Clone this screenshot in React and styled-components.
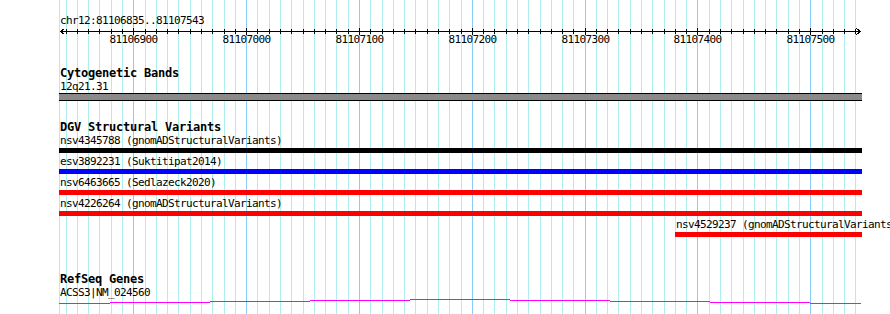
import React from 'react';
import styled, { createGlobalStyle } from 'styled-components';

const GlobalStyle = createGlobalStyle`
  html, body {
    margin: 0;
    padding: 0;
    background: #fff;
  }
`

const START = 81106835
const END = 81107543
const X0 = 59.96
const SCALE = 1.12833
const LEFT = 59
const RIGHT = 862

const toX = (bp) => X0 + (bp - START) * SCALE

const minorTicks = []
for (let bp = Math.ceil(START / 10) * 10; bp <= END; bp += 10) minorTicks.push(bp)
const majorTicks = minorTicks.filter((bp) => bp % 100 === 0)

const variants = [
    { name: 'nsv4345788', source: 'gnomADStructuralVariants', color: '#000000', start: 81106700, end: 81107800 },
    { name: 'esv3892231', source: 'Suktitipat2014', color: '#0000ff', start: 81106700, end: 81107800 },
    { name: 'nsv6463665', source: 'Sedlazeck2020', color: '#ff0000', start: 81106700, end: 81107800 },
    { name: 'nsv4226264', source: 'gnomADStructuralVariants', color: '#ff0000', start: 81106700, end: 81107800 },
    { name: 'nsv4529237', source: 'gnomADStructuralVariants', color: '#ff0000', start: 81107380, end: 81107800 },
]

const Panel = styled.div`
    position: relative;
    width: 890px;
    height: 314px;
    overflow: hidden;
    background: #fff;
    font-family: "DejaVu Sans Mono", "Liberation Mono", monospace;
    color: #000;
`

const Grid = styled.svg`
    position: absolute;
    left: 0;
    top: 0;
    width: 890px;
    height: 314px;
    z-index: 0;
`

const Tracks = styled.div`
    position: relative;
    z-index: 1;
    padding-left: ${LEFT}px;
`

const RulerBlock = styled.section`
    box-sizing: border-box;
    height: 47px;
    padding-top: 14px;
`

const SmallText = styled.div`
    font-size: 11px;
    letter-spacing: -0.62px;
    line-height: 13px;
    height: 13px;
    padding-left: 1px;
    white-space: nowrap;
`

const Scale = styled.div`
    position: relative;
    height: 20px;
`

const ScaleSvg = styled.svg`
    display: block;
    width: ${RIGHT - LEFT}px;
    height: 9px;
`

const TickLabel = styled.span`
    position: absolute;
    top: 6px;
    transform: translateX(-50%);
    font-size: 11px;
    letter-spacing: -0.62px;
    line-height: 13px;
    white-space: nowrap;
`

const Track = styled.section`
    margin-top: ${(p) => p.$gap}px;
`

const TrackTitle = styled.h3`
    margin: 0;
    padding-left: 1px;
    font-size: 12px;
    letter-spacing: -0.22px;
    line-height: 13px;
    height: 13px;
    font-weight: bold;
    white-space: nowrap;
`

const BandBar = styled.div`
    box-sizing: border-box;
    width: ${RIGHT - LEFT}px;
    height: 8px;
    background: #8a8a8a;
    border-top: 1px solid #000;
    border-bottom: 1px solid #000;
`

const FeatureRow = styled.div`
    height: 21px;
`

const FeatureBar = styled.div`
    height: 5px;
    margin-top: 1px;
    background: ${(p) => p.$color};
`

const GeneSvg = styled.svg`
    display: block;
    width: ${RIGHT - LEFT}px;
    height: 6px;
`

const clip = (x) => Math.max(LEFT, Math.min(RIGHT, x))

function Ruler() {
    const w = RIGHT - LEFT
    const y = 4.5
    return (
        <RulerBlock>
            <SmallText>chr12:{START}..{END}</SmallText>
            <Scale>
                <ScaleSvg viewBox={`0 0 ${w} 9`} shapeRendering="crispEdges">
                    <line x1={1} y1={y} x2={w - 1} y2={y} stroke="#000" />
                    <path d={`M1.5 ${y} L5.5 ${y - 3} M1.5 ${y} L5.5 ${y + 3}`} stroke="#000" fill="none" />
                    <path d={`M${w - 1.5} ${y} L${w - 5.5} ${y - 3} M${w - 1.5} ${y} L${w - 5.5} ${y + 3}`} stroke="#000" fill="none" />
                    {minorTicks.map((bp) => {
                        const x = Math.round(toX(bp)) - LEFT + 0.5
                        const major = bp % 100 === 0
                        return <line key={bp} x1={x} x2={x} y1={major ? 1 : 2} y2={major ? 8 : 7} stroke="#000" />
                    })}
                </ScaleSvg>
                {majorTicks.map((bp) => (
                    <TickLabel key={bp} style={{ left: Math.round(toX(bp)) - LEFT + 0.5 }}>{bp}</TickLabel>
                ))}
            </Scale>
        </RulerBlock>
    )
}

function GeneLine() {
    const w = RIGHT - LEFT
    const steps = [[0, 51, 4], [51, 151, 3], [151, 251, 2], [251, 351, 1], [351, 451, 0], [451, 551, 1], [551, 651, 2], [651, 751, 3], [751, w - 1, 4]]
    return (
        <GeneSvg viewBox={`0 0 ${w} 6`} shapeRendering="crispEdges">
            {steps.map(([a, b, y]) => (
                <line key={a} x1={a} x2={b} y1={y + 0.5} y2={y + 0.5} stroke="#ff00ff" />
            ))}
        </GeneSvg>
    )
}

export default function App() {
    return (
        <Panel>
            <GlobalStyle />
            <Grid viewBox="0 0 890 314" shapeRendering="crispEdges">
                <line x1={LEFT + 0.5} x2={LEFT + 0.5} y1={0} y2={314} stroke="#afeeee" />
                {minorTicks.map((bp) => {
                    const x = Math.round(toX(bp)) + 0.5
                    return <line key={bp} x1={x} x2={x} y1={0} y2={314} stroke={bp % 100 === 0 ? '#87cefa' : '#afeeee'} />
                })}
            </Grid>
            <Tracks>
                <Ruler />

                <Track $gap={20}>
                    <TrackTitle>Cytogenetic Bands</TrackTitle>
                    <SmallText>12q21.31</SmallText>
                    <BandBar />
                </Track>

                <Track $gap={20}>
                    <TrackTitle>DGV Structural Variants</TrackTitle>
                    {variants.map((v) => {
                        const a = clip(Math.round(toX(v.start)))
                        const b = clip(Math.round(toX(v.end)))
                        return (
                            <FeatureRow key={v.name} style={{ marginLeft: a - LEFT }}>
                                <SmallText>{v.name} ({v.source})</SmallText>
                                <FeatureBar $color={v.color} style={{ width: b - a }} />
                            </FeatureRow>
                        )
                    })}
                </Track>

                <Track $gap={34}>
                    <TrackTitle>RefSeq Genes</TrackTitle>
                    <SmallText>ACSS3|NM_024560</SmallText>
                    <GeneLine />
                </Track>
            </Tracks>
        </Panel>
    )
}
